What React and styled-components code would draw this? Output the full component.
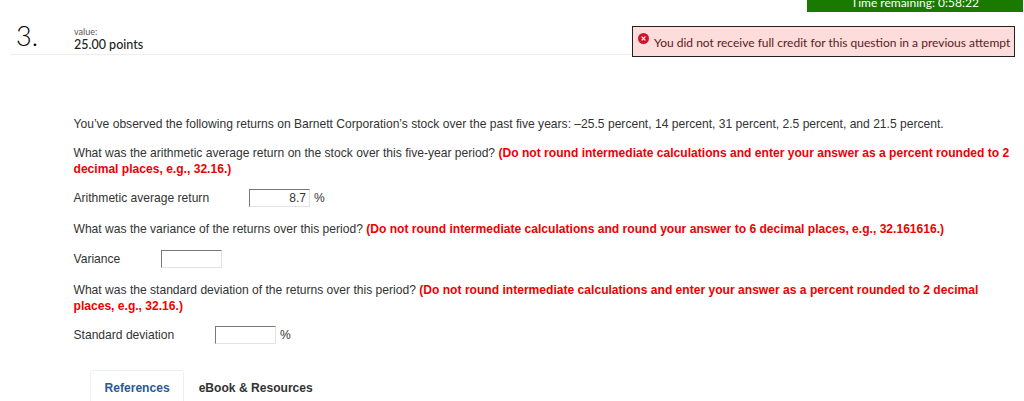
import React from "react";
import styled, { createGlobalStyle } from "styled-components";

const GlobalStyle = createGlobalStyle`
  html, body { margin: 0; padding: 0; background: #fff; }
  body { font-family: "Liberation Sans", Arial, sans-serif; color: #333; overflow: hidden; }
`;

const Page = styled.div`
  width: 1024px;
  height: 401px;
  overflow: hidden;
`;

const TimerRow = styled.div`
  display: flex;
  justify-content: flex-end;
  padding-right: 1px;
`;

const Timer = styled.div`
  width: 216px;
  height: 12px;
  background: #1a7a00;
  color: #fff;
  font-family: Lato, sans-serif;
  font-size: 12px;
  text-align: center;
  overflow: hidden;
`;

const TimerText = styled.span`
  display: block;
  line-height: 12px;
  margin-top: -3px;
`;

const Header = styled.div`
  display: flex;
  align-items: flex-start;
  margin: 14px 9px 0 10px;
`;

const HeaderLeft = styled.div`
  flex: 1;
  height: 28px;
  display: flex;
  border-bottom: 1px solid #eee;
`;

const Number = styled.div`
  width: 64px;
  padding-left: 6px;
  box-sizing: border-box;
  font-family: Lato, sans-serif;
  font-weight: 300;
  font-size: 27px;
  line-height: 38px;
  color: #000;
  margin-top: -9px;
`;

const ValueBlock = styled.div`
  padding-top: 0;
`;

const ValueLabel = styled.div`
  font-family: Lato, sans-serif;
  font-size: 9px;
  line-height: 11px;
  color: #555;
`;

const Points = styled.div`
  font-family: Lato, sans-serif;
  font-size: 12.5px;
  line-height: 15px;
  font-weight: 500;
  color: #222;
`;

const Alert = styled.div`
  width: 383px;
  height: 31px;
  box-sizing: border-box;
  border: 1px solid #222;
  background: #fddcdc;
  color: #5a1a1a;
  font-family: Lato, sans-serif;
  font-size: 12px;
  display: flex;
  align-items: flex-start;
  padding: 6px 0 0 5px;
  gap: 5px;
`;

const AlertIcon = styled.svg`
  width: 11px;
  height: 11px;
  flex: none;
`;

const AlertText = styled.span`
  line-height: 16px;
  margin-top: 2px;
  white-space: nowrap;
`;

const Body = styled.div`
  padding: 59px 0 0 73.5px;
  font-size: 12.08px;
  line-height: 16px;
  color: #333;
`;

const Para = styled.p`
  margin: 0 0 ${(p) => p.$gap || 12}px;
  width: 940px;
`;

const Red = styled.b`
  color: #ee0000;
`;

const AnswerRow = styled.div`
  display: flex;
  align-items: center;
  height: 19px;
  margin-bottom: 14px;
`;

const AnswerLabel = styled.span`
  width: ${(p) => p.$width}px;
  flex: none;
`;

const AnswerInput = styled.div`
  width: 61px;
  height: 18px;
  box-sizing: border-box;
  border: 1px solid #e3e3e3;
  border-top-color: #777;
  border-left-color: #777;
  background: #fff;
  text-align: right;
  padding-right: 3px;
  line-height: 16px;
`;

const Unit = styled.span`
  margin-left: 4px;
`;

const Tabs = styled.div`
  display: flex;
  margin: 26px 0 0 16.5px;
  font-weight: bold;
`;

const Tab = styled.div`
  height: 40px;
  box-sizing: border-box;
  padding: 10px 13.5px 0;
  line-height: 15px;
  color: ${(p) => (p.$active ? "#2a5a96" : "#333")};
  border: 1px solid ${(p) => (p.$active ? "#eee" : "transparent")};
  border-radius: 3px 3px 0 0;
`;

export default function App() {
  return (
    <Page>
      <GlobalStyle />
      <TimerRow>
        <Timer>
          <TimerText>Time remaining: 0:58:22</TimerText>
        </Timer>
      </TimerRow>
      <Header>
        <HeaderLeft>
          <Number>3.</Number>
          <ValueBlock>
            <ValueLabel>value:</ValueLabel>
            <Points>25.00 points</Points>
          </ValueBlock>
        </HeaderLeft>
        <Alert>
          <AlertIcon viewBox="0 0 12 12">
            <circle cx="6" cy="6" r="6" fill="#d0142c" />
            <path d="M4 4l4 4M8 4l-4 4" stroke="#fff" strokeWidth="1.3" />
          </AlertIcon>
          <AlertText>You did not receive full credit for this question in a previous attempt</AlertText>
        </Alert>
      </Header>
      <Body>
        <Para $gap={13}>
          You’ve observed the following returns on Barnett Corporation’s stock over the past five years: –25.5 percent, 14 percent, 31 percent, 2.5 percent, and 21.5 percent.
        </Para>
        <Para $gap={11}>
          What was the arithmetic average return on the stock over this five-year period?{" "}
          <Red>(Do not round intermediate calculations and enter your answer as a percent rounded to 2 decimal places, e.g., 32.16.)</Red>
        </Para>
        <AnswerRow>
          <AnswerLabel $width={175.5}>Arithmetic average return</AnswerLabel>
          <AnswerInput>8.7</AnswerInput>
          <Unit>%</Unit>
        </AnswerRow>
        <Para>
          What was the variance of the returns over this period?{" "}
          <Red>(Do not round intermediate calculations and round your answer to 6 decimal places, e.g., 32.161616.)</Red>
        </Para>
        <AnswerRow>
          <AnswerLabel $width={87.5}>Variance</AnswerLabel>
          <AnswerInput />
        </AnswerRow>
        <Para $gap={11}>
          What was the standard deviation of the returns over this period?{" "}
          <Red>(Do not round intermediate calculations and enter your answer as a percent rounded to 2 decimal places, e.g., 32.16.)</Red>
        </Para>
        <AnswerRow>
          <AnswerLabel $width={141.5}>Standard deviation</AnswerLabel>
          <AnswerInput />
          <Unit>%</Unit>
        </AnswerRow>
        <Tabs>
          <Tab $active>References</Tab>
          <Tab>eBook &amp; Resources</Tab>
        </Tabs>
      </Body>
    </Page>
  );
}
